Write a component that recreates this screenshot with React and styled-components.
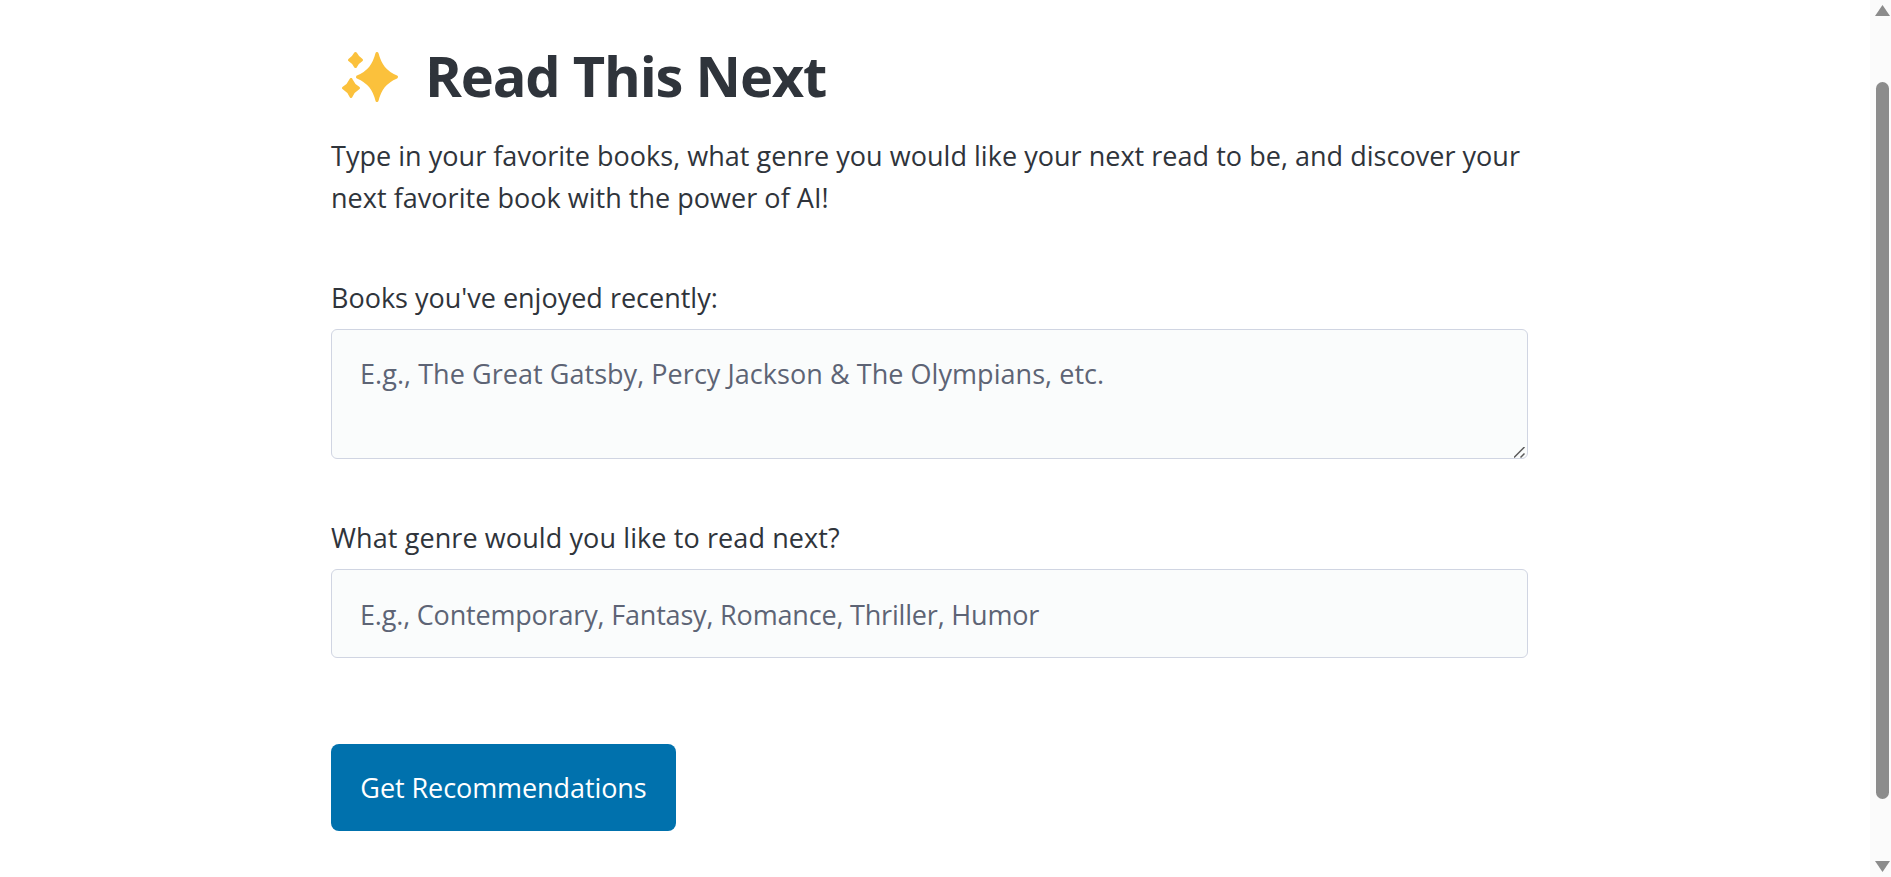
import React from "react";
import styled, { createGlobalStyle } from "styled-components";

const Global = createGlobalStyle`
  html, body { margin: 0; height: 877px; overflow: hidden; background: #fff; }
  body { font-family: "Open Sans", "Noto Sans", "Liberation Sans", sans-serif; color: #2f343b; }
  * { box-sizing: border-box; }
`;
const Page = styled.div`display: flex; height: 877px; overflow: hidden;`;
const Main = styled.main`flex: 1; min-width: 0; padding: 38px 0 0 331px;`;
const Column = styled.div`width: 1197px; display: flex; flex-direction: column;`;
const Title = styled.h1`
  margin: 0 0 23px; display: flex; align-items: center; gap: 24px; padding-left: 9px;
  font-size: 56px; line-height: 74px; font-weight: 700; letter-spacing: -1.2px;
`;
const Intro = styled.p`margin: 0 0 58px; font-size: 27px; line-height: 42px; letter-spacing: 0.03px;`;
const Field = styled.div`position: relative; display: flex; flex-direction: column; margin-bottom: ${p => p.$gap}px;`;
const Label = styled.label`font-size: 27px; line-height: 42px; letter-spacing: ${p => p.$spacing || 0}px; margin-bottom: 10px;`;
const controlCss = `
  width: 100%; display: block; margin: 0; padding: 22px 28px 20px;
  background: #fafcfc; border: 1px solid #d0d5e2; border-radius: 6px; color: #2f343b;
  font: 27px/42px "Open Sans", "Noto Sans", sans-serif; outline: none;
  &::placeholder { color: #5d6475; opacity: 1; }
`;
const TextArea = styled.textarea`
  ${controlCss} height: 130px; padding-top: 23px; padding-bottom: 0; letter-spacing: 0.05px; resize: vertical;
  &::-webkit-resizer { background: transparent; }
`;
const Grip = styled.svg`position: absolute; right: 3px; bottom: 1px; width: 11px; height: 11px; pointer-events: none;`;
const TextInput = styled.input`${controlCss} height: 89px; letter-spacing: -0.18px;`;
const Button = styled.button`
  align-self: flex-start; width: 345px; height: 87px; border: 0; border-radius: 8px; padding: 0;
  background: #0071ad; color: #fff; font: 27px/42px "Open Sans", "Noto Sans", sans-serif; letter-spacing: -0.08px;
`;
const Scrollbar = styled.aside`
  width: 21px; height: 877px; background: #fbfbfb; display: flex; flex-direction: column;
  align-items: center; padding: 5px 0; flex-shrink: 0;
`;
const Thumb = styled.div`width: 13px; height: 718px; margin: 66px 0 62px 4px; border-radius: 7px; background: #8c8c8c;`;
const Arrow = styled.svg`width: 15px; height: 11px; flex-shrink: 0; margin-left: 4px; display: block;`;

const Sparkles = () => (
  <svg width="61" height="58" viewBox="0 0 61 58" aria-hidden="true">
    <g fill="#fbc13c" stroke="#fbc13c" strokeWidth="3" strokeLinejoin="round">
      <path d="M37 7.5 C40 19 45 26 56.5 31 C45 36 40 43 37 54.5 C34 43 29 36 17.5 31 C29 26 34 19 37 7.5 Z" />
      <path d="M15.5 7.5 C17 10.5 19 12.5 21.5 14 C19 15.5 17 17.5 15.5 20.5 C14 17.5 12 15.5 9.5 14 C12 12.5 14 10.5 15.5 7.5 Z" />
      <path d="M11 33.5 C12.5 37 15 40 18.5 42 C15 44 12.5 47 11 50.5 C9.5 47 7 44 3.5 42 C7 40 9.5 37 11 33.5 Z" />
    </g>
  </svg>
);

export default function App() {
  return (
    <Page>
      <Global />
      <Main>
        <Column>
          <Title><Sparkles /><span>Read This Next</span></Title>
          <Intro>Type in your favorite books, what genre you would like your next read to be, and discover your next favorite book with the power of AI!</Intro>
          <Field $gap={58}>
            <Label htmlFor="books">Books you've enjoyed recently:</Label>
            <TextArea id="books" placeholder="E.g., The Great Gatsby, Percy Jackson & The Olympians, etc." />
            <Grip viewBox="0 0 11 11" aria-hidden="true">
              <path d="M0 10.5 L10.5 0 M6.5 10.5 L10.5 6.5" stroke="#5a5a5a" strokeWidth="1.5" fill="none" />
            </Grip>
          </Field>
          <Field $gap={86}>
            <Label htmlFor="genre" $spacing={0.1}>What genre would you like to read next?</Label>
            <TextInput id="genre" placeholder="E.g., Contemporary, Fantasy, Romance, Thriller, Humor" />
          </Field>
          <Button>Get Recommendations</Button>
        </Column>
      </Main>
      <Scrollbar>
        <Arrow viewBox="0 0 15 11"><path d="M7.5 0 L15 11 H0 Z" fill="#8c8c8c" /></Arrow>
        <Thumb />
        <Arrow viewBox="0 0 15 11"><path d="M0 0 H15 L7.5 11 Z" fill="#8c8c8c" /></Arrow>
      </Scrollbar>
    </Page>
  );
}
